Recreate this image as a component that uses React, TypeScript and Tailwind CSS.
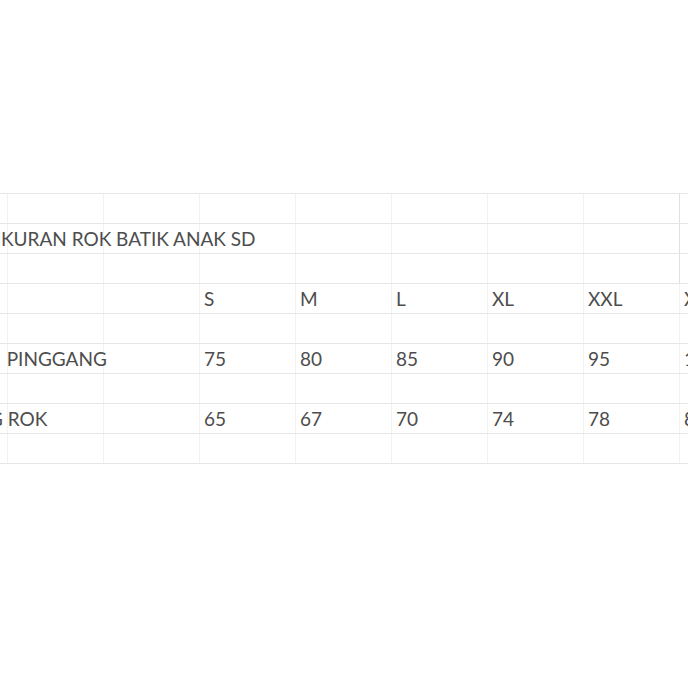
import React from "react";

const cols = 9;
const rows: (string | null)[][] = [
  [],
  ["", "UKURAN ROK BATIK ANAK SD"],
  [],
  ["", "", "", "S", "M", "L", "XL", "XXL", "XXXL"],
  [],
  ["LINGKAR PINGGANG", "", "", "75", "80", "85", "90", "95", "100"],
  [],
  ["PANJANG ROK", "", "", "65", "67", "70", "74", "78", "82"],
  [],
];

export default function App() {
  return (
    <div className="w-[688px] h-[688px] overflow-hidden bg-white" style={{ fontFamily: "Lato, 'Noto Sans', sans-serif" }}>
      <div className="ml-[-88px] pt-[193px]">
        <div className="border-t border-[#e6e6e6] w-max">
          {rows.map((row, r) => (
            <div key={r} className="flex h-[30px] border-b border-[#e6e6e6]">
              {Array.from({ length: cols }).map((_, c) => (
                <div
                  key={c}
                  className={
                    "w-[96px] shrink-0 border-r flex items-center pl-[4px] text-[19px] leading-none text-[#4d4d4d] whitespace-nowrap overflow-visible " +
                    (c === 7 && r < 3 ? "border-[#e0e0e0]" : "border-[#f2f2f2]")
                  }
                >
                  {row[c] ? (
                    <span
                      className={
                        r === 1
                          ? "relative z-10 ml-[-25px]"
                          : r === 5 && c === 0
                          ? "relative z-10 [word-spacing:5px]"
                          : "relative z-10"
                      }
                    >
                      {row[c]}
                    </span>
                  ) : null}
                </div>
              ))}
            </div>
          ))}
        </div>
      </div>
    </div>
  );
}
